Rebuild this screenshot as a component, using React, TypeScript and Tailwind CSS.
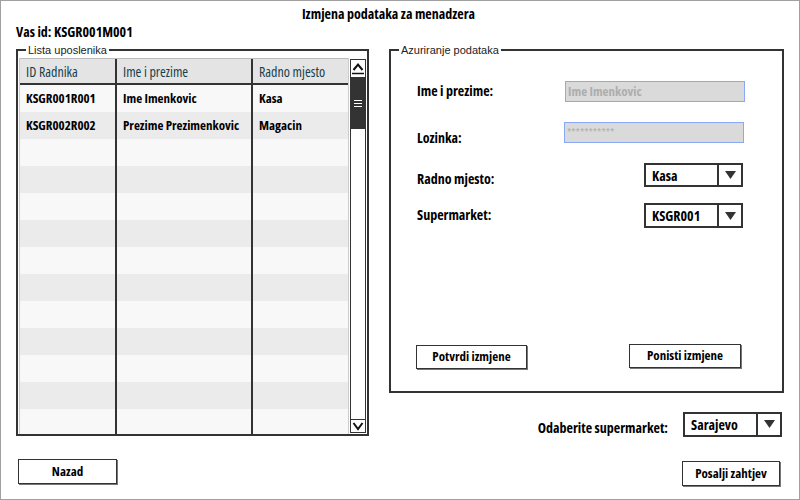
import React from 'react';

const rows = [
  { id: 'KSGR001R001', name: 'Ime Imenkovic', job: 'Kasa' },
  { id: 'KSGR002R002', name: 'Prezime Prezimenkovic', job: 'Magacin' },
  ...Array.from({ length: 11 }, () => ({ id: '', name: '', job: '' })),
];

function Dropdown({ value, h }: { value: string; h: string }) {
  return (
    <div className={`flex w-[99px] ${h} border-2 border-[#333] bg-white`}>
      <div className="flex flex-1 items-center pl-[6px] text-[14px] font-bold">{value}</div>
      <div className="flex w-[24px] items-center justify-center border-l-2 border-[#333]">
        <svg width="11" height="8" viewBox="0 0 11 8">
          <polygon points="0,0 11,0 5.5,8" fill="#333" />
        </svg>
      </div>
    </div>
  );
}

function Btn({ label, cls }: { label: string; cls: string }) {
  return (
    <button
      className={`flex items-center justify-center border border-[#333] bg-white text-[13px] font-bold shadow-[1px_1px_0_#777] ${cls}`}
    >
      {label}
    </button>
  );
}

function Legend({ text }: { text: string }) {
  return (
    <span className="absolute -top-[7px] left-[8px] bg-white px-[2px] font-[family-name:Liberation_Sans,Arial,sans-serif] text-[11px] leading-[13px] text-[#222]">
      {text}
    </span>
  );
}

function Scrollbar() {
  return (
    <div className="flex w-[18px] flex-col p-[1px]">
      <div className="flex flex-1 flex-col border border-[#333] bg-white">
        <div className="flex h-[15px] items-center justify-center">
          <svg width="14" height="14" viewBox="0 0 14 14">
            <polyline points="2.5,9 7,3.5 11.5,9" fill="none" stroke="#111" strokeWidth="2" />
            <line x1="1" y1="12.5" x2="13" y2="12.5" stroke="#111" strokeWidth="1.5" />
          </svg>
        </div>
        <div className="mt-[2px] flex h-[52px] flex-col items-center justify-center gap-[2px] bg-[#333]">
          <div className="h-[1px] w-[8px] bg-white" />
          <div className="h-[1px] w-[8px] bg-white" />
          <div className="h-[1px] w-[8px] bg-white" />
        </div>
        <div className="flex-1" />
        <div className="flex h-[13px] items-center justify-center border-t border-[#333]">
          <svg width="14" height="11" viewBox="0 0 14 11">
            <polyline points="2.5,2 7,8 11.5,2" fill="none" stroke="#111" strokeWidth="2" />
          </svg>
        </div>
      </div>
    </div>
  );
}

export default function App() {
  return (
    <div className="flex h-[500px] w-[800px] flex-col border border-[#a0a0a0] bg-white font-[family-name:Open_Sans,sans-serif] font-stretch-condensed text-black">
      <div className="mt-[4px] h-[18px] pr-[23px] text-center text-[14px] font-bold leading-[18px]">
        Izmjena podataka za menadzera
      </div>
      <div className="ml-[15px] h-[18px] text-[14px] font-bold leading-[18px]">Vas id: KSGR001M001</div>

      <div className="mt-[8px] flex items-start">
        {/* lijeva strana */}
        <div className="ml-[15px] flex flex-col">
          <div className="relative h-[387px] w-[353px] border-2 border-[#333] pl-[1px] pt-[7px]">
            <Legend text="Lista uposlenika" />
            <div className="flex h-full overflow-hidden">
              <div className="flex w-[330px] flex-col border-x border-[#ccc]">
                <div className="flex h-[27px] shrink-0 border-b-2 border-t border-[#333] border-t-[#bbb] bg-[#e4e4e4] text-[14px] font-medium text-[#173f4d]">
                  <div className="flex w-[97px] items-center border-r-2 border-[#333] pl-[6px]">ID Radnika</div>
                  <div className="flex w-[136px] items-center border-r-2 border-[#333] pl-[6px]">Ime i prezime</div>
                  <div className="flex w-[95px] items-center pl-[6px]">Radno mjesto</div>
                </div>
                {rows.map((r, i) => (
                  <div
                    key={i}
                    className={`flex h-[27px] shrink-0 text-[13px] font-bold ${i % 2 === 0 ? 'bg-[#f8f8f8]' : 'bg-[#ebebeb]'}`}
                  >
                    <div className="flex w-[97px] items-center border-r-2 border-[#333] pl-[6px]">{r.id}</div>
                    <div className="flex w-[136px] items-center border-r-2 border-[#333] pl-[6px]">{r.name}</div>
                    <div className="flex w-[95px] items-center pl-[6px]">{r.job}</div>
                  </div>
                ))}
              </div>
              <Scrollbar />
            </div>
          </div>
          <Btn label="Nazad" cls="ml-[2px] mt-[23px] h-[25px] w-[99px]" />
        </div>

        {/* desna strana */}
        <div className="ml-[20px] flex w-[395px] flex-col">
          <div className="relative flex h-[344px] flex-col border-2 border-[#333]">
            <Legend text="Azuriranje podataka" />
            <div className="mt-[30px] flex h-[21px] items-center pl-[26px]">
              <div className="-mt-[2px] w-[148px] text-[14px] font-bold">Ime i prezime:</div>
              <div className="flex h-[21px] w-[180px] items-center border border-[#8aa8f5] bg-[#dadada] pl-[2px] text-[13px] font-bold text-[#adadad]">
                Ime Imenkovic
              </div>
            </div>
            <div className="mt-[20px] flex h-[21px] items-center pl-[26px]">
              <div className="mt-[9px] w-[147px] text-[14px] font-bold">Lozinka:</div>
              <div className="flex h-[21px] w-[180px] items-center border border-[#8aa8f5] bg-[#dadada] pl-[2px] text-[11px] text-[#adadad]">
                ***********
              </div>
            </div>
            <div className="mt-[20px] flex h-[24px] items-center pl-[26px]">
              <div className="mt-[7px] text-[14px] font-bold">Radno mjesto:</div>
              <div className="ml-auto mr-[39px]">
                <Dropdown value="Kasa" h="h-[24px]" />
              </div>
            </div>
            <div className="mt-[16px] flex h-[25px] items-center pl-[26px]">
              <div className="-mt-[3px] text-[14px] font-bold">Supermarket:</div>
              <div className="ml-auto mr-[39px]">
                <Dropdown value="KSGR001" h="h-[25px]" />
              </div>
            </div>
            <div className="mt-[116px] flex items-start justify-between pl-[25px] pr-[41px]">
              <Btn label="Potvrdi izmjene" cls="mt-[1px] h-[24px] w-[111px]" />
              <Btn label="Ponisti izmjene" cls="h-[24px] w-[112px]" />
            </div>
          </div>

          <div className="mt-[17px] flex items-center justify-end pr-[2px]">
            <div className="mt-[7px] text-[14px] font-bold">Odaberite supermarket:</div>
            <div className="ml-[15px]">
              <Dropdown value="Sarajevo" h="h-[25px]" />
            </div>
          </div>
          <Btn label="Posalji zahtjev" cls="mr-[4px] mt-[23px] h-[25px] w-[98px] self-end" />
        </div>
      </div>
    </div>
  );
}
